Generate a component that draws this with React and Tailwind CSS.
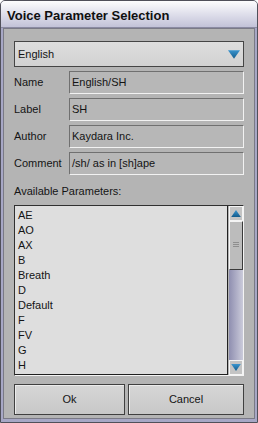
import React from "react"

const FONT = { fontFamily: '"Liberation Sans", Arial, sans-serif' }

const params = ["AE", "AO", "AX", "B", "Breath", "D", "Default", "F", "FV", "G", "H"]

const fields = [
  ["Name", "English/SH"],
  ["Label", "SH"],
  ["Author", "Kaydara Inc."],
  ["Comment", "/sh/ as in [sh]ape"],
]

function Arrow({ up, w = 11, h = 8, id }) {
  return (
    <svg width={w} height={h} viewBox="0 0 11 8">
      <defs>
        <linearGradient id={id} x1="0" y1="0" x2="0" y2="1">
          <stop offset="0" stopColor="#3a95cf" />
          <stop offset="1" stopColor="#135c8c" />
        </linearGradient>
      </defs>
      {up ? (
        <polygon points="5.5,0 11,8 0,8" fill={`url(#${id})`} />
      ) : (
        <polygon points="0,0 11,0 5.5,8" fill={`url(#${id})`} />
      )}
    </svg>
  )
}

export default function App() {
  return (
    <div className="w-[258px] h-[423px] bg-white text-[11px] text-[#141414]" style={FONT}>
      <div className="flex h-full flex-col rounded-t-[5px] border border-[#50505a] bg-[#a7a7c5]">
        {/* Title bar */}
        <div className="h-[27px] rounded-t-[4px] border-b border-[#8a8aa2] bg-gradient-to-b from-[#fdfdfe] to-[#c2c2d8] pl-[6px] pt-[7px]">
          <div className="text-[13px] font-bold leading-[15px] text-[#101010]">Voice Parameter Selection</div>
        </div>

        {/* Body */}
        <div className="mx-[2px] mb-[3px] flex flex-1 flex-col border border-[#7a7a86] bg-[#b4b4b4] pl-[10px] pt-[12px] pb-[3px]">
          {/* Dropdown */}
          <div className="flex h-[26px] w-[230px] items-center justify-between border border-[#454545] bg-gradient-to-b from-[#dedede] to-[#d2d2d2] pl-[3px] pr-[3px]">
            <span>English</span>
            <Arrow id="dd" w={12} h={9} />
          </div>

          {/* Fields */}
          <div className="mt-[4px] flex flex-col gap-[4px]">
            {fields.map(([label, value]) => (
              <div key={label} className="flex h-[23px] items-center">
                <div className="w-[55px]">{label}</div>
                <div className="flex h-[23px] w-[175px] items-center border-t border-l border-b border-r border-t-[#707070] border-l-[#707070] border-b-[#f2f2f2] border-r-[#f2f2f2] bg-[#b7b7b7] pl-[2px]">
                  {value}
                </div>
              </div>
            ))}
          </div>

          <div className="mt-[10px] leading-[13px]">Available Parameters:</div>

          {/* List with scrollbar */}
          <div className="mt-[7px] flex h-[171px] w-[230px] border-t border-l border-b border-r border-t-[#303030] border-l-[#303030] border-b-[#f4f4f4] border-r-[#f4f4f4]">
            <div className="flex-1 border-r border-b border-[#202020] bg-[#dedede] pl-[3px] pt-[2px]">
              {params.map((p) => (
                <div key={p} className="leading-[15px]">{p}</div>
              ))}
            </div>
            <div className="flex w-[15px] flex-col bg-[#b4b4b4] pl-[1px]">
              <div className="flex h-[15px] items-center justify-center border border-[#f4f4f4] bg-[#c4c4c4]">
                <Arrow up id="up" w={10} h={7} />
              </div>
              <div className="relative h-[49px] border-t border-l border-r border-b border-t-[#f4f4f4] border-l-[#f4f4f4] border-r-[#3a3a3a] border-b-[#3a3a3a] bg-[#bcbcbc]">
                <div className="absolute left-[3px] right-[3px] top-[20px] flex flex-col gap-[1px]">
                  <div className="h-px bg-[#8e8e8e]" />
                  <div className="h-px bg-[#8e8e8e]" />
                  <div className="h-px bg-[#8e8e8e]" />
                </div>
              </div>
              <div className="flex-1 bg-gradient-to-r from-[#8f8fb0] to-[#cbcbda]" />
              <div className="flex h-[15px] items-center justify-center border border-[#f4f4f4] bg-[#c4c4c4]">
                <Arrow id="down" w={10} h={7} />
              </div>
            </div>
          </div>

          {/* Buttons */}
          <div className="mt-[8px] flex gap-[3px]">
            <button className="flex h-[31px] w-[111px] items-center justify-center border border-[#404040] bg-gradient-to-b from-[#d6d6d6] to-[#c8c8c8] shadow-[inset_1px_1px_0_#ececec]">
              Ok
            </button>
            <button className="flex h-[31px] w-[116px] items-center justify-center border border-[#404040] bg-gradient-to-b from-[#d6d6d6] to-[#c8c8c8] shadow-[inset_1px_1px_0_#ececec]">
              Cancel
            </button>
          </div>
        </div>
      </div>
    </div>
  )
}
